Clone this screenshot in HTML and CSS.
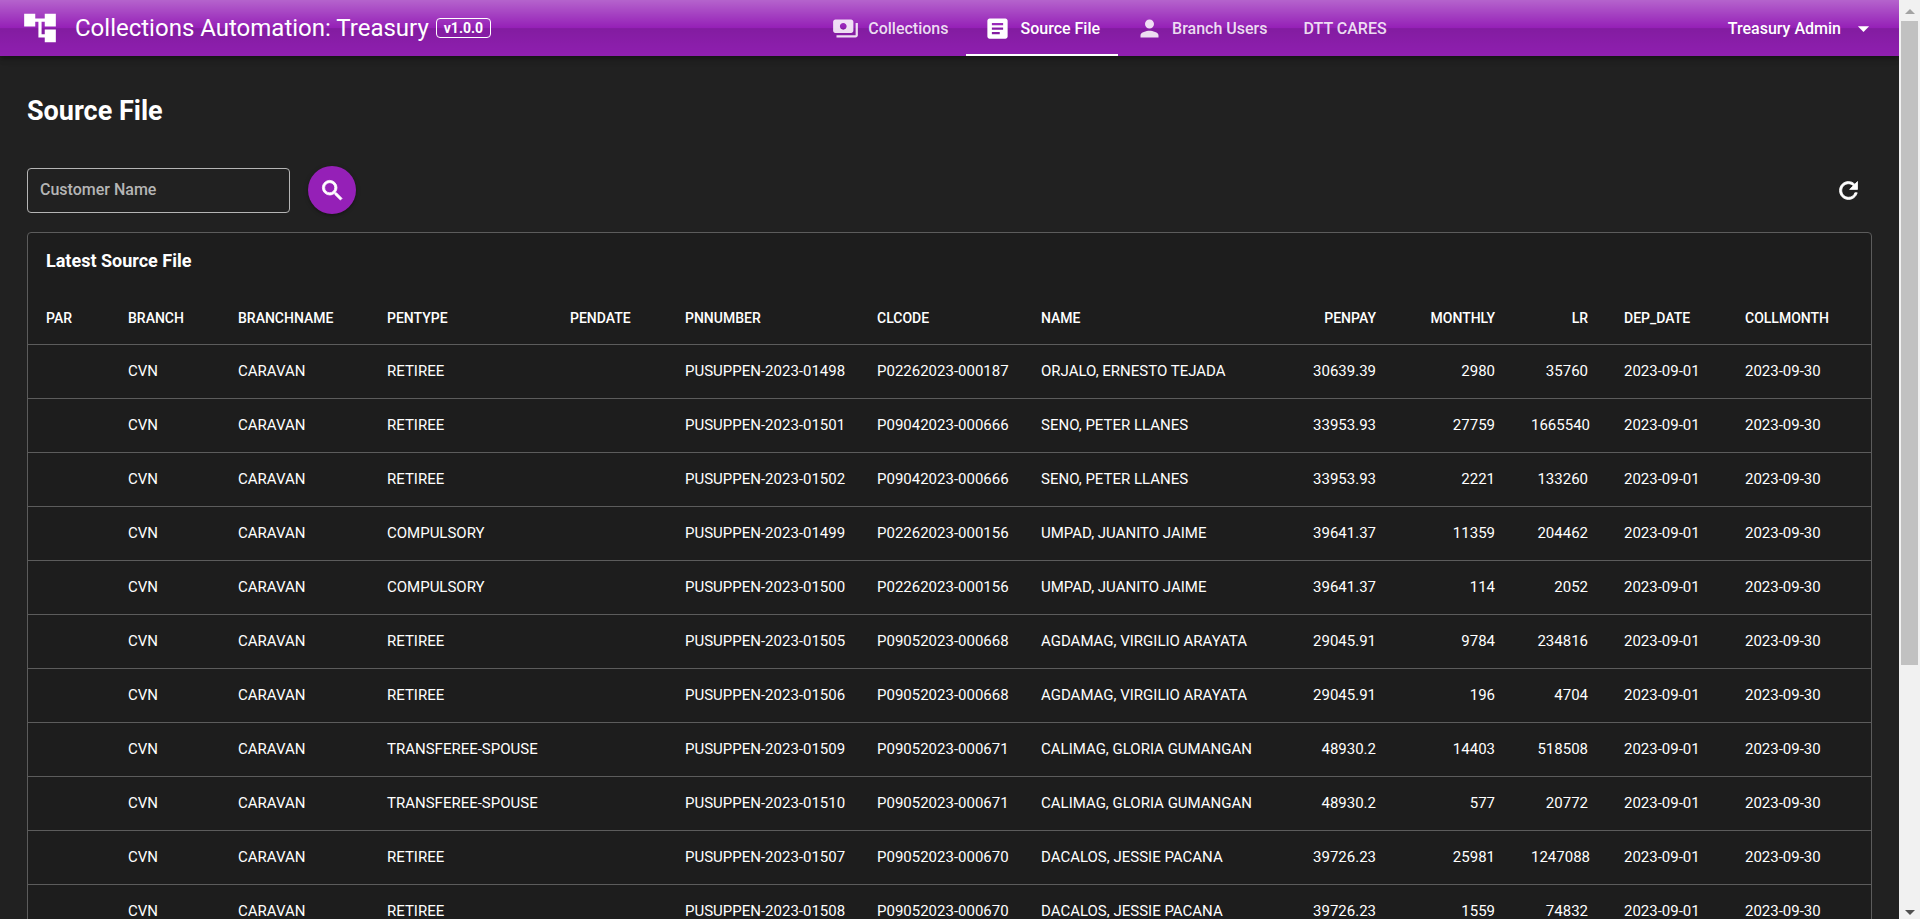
FILE: index.html
```html
<!DOCTYPE html>
<html lang="en">
<head>
<meta charset="utf-8">
<title>Collections Automation: Treasury</title>
<link rel="stylesheet" href="styles.css">
</head>
<body>
<div class="app">
  <div class="page">
    <header class="toolbar">
      <div class="brand">
        <svg class="brand-icon" viewBox="0 0 24 24" aria-hidden="true"><path d="M22 11V3h-7v3H9V3H2v8h7V8h2v10h4v3h7v-8h-7v3h-2V8h2v3z"/></svg>
        <span class="brand-name">Collections Automation: Treasury</span>
        <span class="version">v1.0.0</span>
      </div>
      <nav class="tabs">
        <a class="tab" href="#collections"><svg class="tab-icon" viewBox="0 0 24 24" aria-hidden="true"><path d="M19 14V6c0-1.100-.9-2-2-2H3c-1.100 0-2 .9-2 2v8c0 1.100.9 2 2 2h14c1.100 0 2-.9 2-2zm-9-1c-1.660 0-3-1.340-3-3s1.340-3 3-3 3 1.340 3 3-1.340 3-3 3zm13-6v11c0 1.100-.9 2-2 2H4v-2h17V7h2z"/></svg>Collections</a>
        <a class="tab tab-active" href="#source-file" aria-current="page"><svg class="tab-icon" viewBox="0 0 24 24" aria-hidden="true"><path d="M19 3H5c-1.100 0-2 .9-2 2v14c0 1.100.9 2 2 2h14c1.100 0 2-.9 2-2V5c0-1.100-.9-2-2-2zm-5 14H7v-2h7v2zm3-4H7v-2h10v2zm0-4H7V7h10v2z"/></svg>Source File</a>
        <a class="tab" href="#branch-users"><svg class="tab-icon" viewBox="0 0 24 24" aria-hidden="true"><path d="M12 12c2.210 0 4-1.790 4-4s-1.790-4-4-4-4 1.790-4 4 1.790 4 4 4zm0 2c-2.670 0-8 1.340-8 4v2h16v-2c0-2.660-5.330-4-8-4z"/></svg>Branch Users</a>
        <a class="tab" href="#dtt-cares">DTT CARES</a>
      </nav>
      <button class="account" type="button">Treasury Admin<svg class="caret" viewBox="0 0 24 24" aria-hidden="true"><path d="M7 10l5 5 5-5z"/></svg></button>
    </header>
    <main class="content">
      <h1 class="heading">Source File</h1>
      <form class="search">
        <input class="field" type="text" placeholder="Customer Name" aria-label="Customer Name">
        <button class="search-button" type="button" aria-label="Search"><svg class="icon" viewBox="0 0 24 24" aria-hidden="true"><path d="M15.500 14h-.79l-.28-.27A6.471 6.471 0 0 0 16 9.500 6.500 6.500 0 1 0 9.500 16c1.610 0 3.090-.59 4.230-1.570l.27.28v.79l5 4.990L20.490 19l-4.990-5zm-6 0C7.010 14 5 11.990 5 9.500S7.010 5 9.500 5 14 7.010 14 9.500 11.990 14 9.500 14z"/></svg></button>
        <button class="refresh" type="button" aria-label="Refresh"><svg class="icon" viewBox="0 0 24 24" aria-hidden="true"><path d="M17.650 6.350A7.958 7.958 0 0 0 12 4c-4.420 0-7.990 3.580-7.990 8s3.570 8 7.990 8c3.730 0 6.840-2.550 7.730-6h-2.080A5.990 5.990 0 0 1 12 18c-3.310 0-6-2.690-6-6s2.690-6 6-6c1.660 0 3.140.69 4.220 1.780L13 11h7V4l-2.350 2.350z"/></svg></button>
      </form>
      <section class="card">
        <h2 class="card-title">Latest Source File</h2>
        <table class="table">
          <colgroup><col class="c-par"><col class="c-branch"><col class="c-branchname"><col class="c-pentype"><col class="c-pendate"><col class="c-pnnumber"><col class="c-clcode"><col class="c-name"><col class="c-penpay"><col class="c-monthly"><col class="c-lr"><col class="c-depdate"><col class="c-collmonth"></colgroup>
          <thead>
            <tr><th>PAR</th><th>BRANCH</th><th>BRANCHNAME</th><th>PENTYPE</th><th>PENDATE</th><th>PNNUMBER</th><th>CLCODE</th><th>NAME</th><th class="num">PENPAY</th><th class="num">MONTHLY</th><th class="num">LR</th><th>DEP_DATE</th><th>COLLMONTH</th></tr>
          </thead>
          <tbody>
            <tr><td></td><td>CVN</td><td>CARAVAN</td><td>RETIREE</td><td></td><td>PUSUPPEN-2023-01498</td><td>P02262023-000187</td><td>ORJALO, ERNESTO TEJADA</td><td class="num">30639.39</td><td class="num">2980</td><td class="num">35760</td><td>2023-09-01</td><td>2023-09-30</td></tr>
            <tr><td></td><td>CVN</td><td>CARAVAN</td><td>RETIREE</td><td></td><td>PUSUPPEN-2023-01501</td><td>P09042023-000666</td><td>SENO, PETER LLANES</td><td class="num">33953.93</td><td class="num">27759</td><td class="num">1665540</td><td>2023-09-01</td><td>2023-09-30</td></tr>
            <tr><td></td><td>CVN</td><td>CARAVAN</td><td>RETIREE</td><td></td><td>PUSUPPEN-2023-01502</td><td>P09042023-000666</td><td>SENO, PETER LLANES</td><td class="num">33953.93</td><td class="num">2221</td><td class="num">133260</td><td>2023-09-01</td><td>2023-09-30</td></tr>
            <tr><td></td><td>CVN</td><td>CARAVAN</td><td>COMPULSORY</td><td></td><td>PUSUPPEN-2023-01499</td><td>P02262023-000156</td><td>UMPAD, JUANITO JAIME</td><td class="num">39641.37</td><td class="num">11359</td><td class="num">204462</td><td>2023-09-01</td><td>2023-09-30</td></tr>
            <tr><td></td><td>CVN</td><td>CARAVAN</td><td>COMPULSORY</td><td></td><td>PUSUPPEN-2023-01500</td><td>P02262023-000156</td><td>UMPAD, JUANITO JAIME</td><td class="num">39641.37</td><td class="num">114</td><td class="num">2052</td><td>2023-09-01</td><td>2023-09-30</td></tr>
            <tr><td></td><td>CVN</td><td>CARAVAN</td><td>RETIREE</td><td></td><td>PUSUPPEN-2023-01505</td><td>P09052023-000668</td><td>AGDAMAG, VIRGILIO ARAYATA</td><td class="num">29045.91</td><td class="num">9784</td><td class="num">234816</td><td>2023-09-01</td><td>2023-09-30</td></tr>
            <tr><td></td><td>CVN</td><td>CARAVAN</td><td>RETIREE</td><td></td><td>PUSUPPEN-2023-01506</td><td>P09052023-000668</td><td>AGDAMAG, VIRGILIO ARAYATA</td><td class="num">29045.91</td><td class="num">196</td><td class="num">4704</td><td>2023-09-01</td><td>2023-09-30</td></tr>
            <tr><td></td><td>CVN</td><td>CARAVAN</td><td>TRANSFEREE-SPOUSE</td><td></td><td>PUSUPPEN-2023-01509</td><td>P09052023-000671</td><td>CALIMAG, GLORIA GUMANGAN</td><td class="num">48930.2</td><td class="num">14403</td><td class="num">518508</td><td>2023-09-01</td><td>2023-09-30</td></tr>
            <tr><td></td><td>CVN</td><td>CARAVAN</td><td>TRANSFEREE-SPOUSE</td><td></td><td>PUSUPPEN-2023-01510</td><td>P09052023-000671</td><td>CALIMAG, GLORIA GUMANGAN</td><td class="num">48930.2</td><td class="num">577</td><td class="num">20772</td><td>2023-09-01</td><td>2023-09-30</td></tr>
            <tr><td></td><td>CVN</td><td>CARAVAN</td><td>RETIREE</td><td></td><td>PUSUPPEN-2023-01507</td><td>P09052023-000670</td><td>DACALOS, JESSIE PACANA</td><td class="num">39726.23</td><td class="num">25981</td><td class="num">1247088</td><td>2023-09-01</td><td>2023-09-30</td></tr>
            <tr><td></td><td>CVN</td><td>CARAVAN</td><td>RETIREE</td><td></td><td>PUSUPPEN-2023-01508</td><td>P09052023-000670</td><td>DACALOS, JESSIE PACANA</td><td class="num">39726.23</td><td class="num">1559</td><td class="num">74832</td><td>2023-09-01</td><td>2023-09-30</td></tr>
          </tbody>
        </table>
      </section>
    </main>
  </div>
  <div class="scrollbar" aria-hidden="true">
    <svg class="arrow arrow-up" viewBox="0 0 10 5"><path d="M0 5l5-5 5 5z"/></svg>
    <div class="track"><div class="thumb"></div></div>
    <svg class="arrow" viewBox="0 0 10 5"><path d="M0 0l5 5 5-5z"/></svg>
  </div>
</div>
</body>
</html>
```
FILE: styles.css
```css
:root {
  --primary: #9520b7;
  --line: #5c5c5c;
}

* {
  box-sizing: border-box;
}

body {
  margin: 0;
  background: #212121;
  color: #fff;
  font-family: Roboto, "Liberation Sans", sans-serif;
  font-size: 16px;
  font-weight: 500;
}

button,
input {
  font: inherit;
  color: inherit;
}

svg {
  display: block;
  flex: none;
  fill: currentColor;
}

.app {
  display: flex;
  height: 100vh;
  overflow: hidden;
}

.page {
  flex: 1;
  min-width: 0;
}

.toolbar {
  display: flex;
  align-items: center;
  justify-content: space-between;
  height: 56px;
  padding: 0 22px 0 21px;
  background: linear-gradient(to bottom, rgba(255, 255, 255, 0.3), rgba(255, 255, 255, 0) 50%, rgba(0, 0, 0, 0.12) 51%, rgba(0, 0, 0, 0.04)) var(--primary);
  box-shadow: 0 2px 4px -1px rgba(0, 0, 0, 0.2), 0 4px 5px rgba(0, 0, 0, 0.14), 0 1px 10px rgba(0, 0, 0, 0.12);
}

.brand {
  display: flex;
  align-items: center;
}

.brand-icon {
  width: 38px;
  height: 38px;
}

.brand-name {
  margin-left: 16px;
  font-size: 24px;
  font-weight: 400;
  line-height: 32px;
}

.version {
  margin-left: 7px;
  padding: 1px 7px;
  border: 1px solid #fff;
  border-radius: 4px;
  font-size: 14px;
  font-weight: 700;
  line-height: 16px;
}

.tabs {
  display: flex;
  align-self: stretch;
}

.tab {
  display: flex;
  align-items: center;
  gap: 9px;
  padding: 0 18px;
  border-top: 2px solid transparent;
  border-bottom: 2px solid transparent;
  color: rgba(255, 255, 255, 0.85);
  text-decoration: none;
}

.tab-active {
  border-bottom-color: #fff;
  color: #fff;
}

.tab-icon,
.caret {
  width: 27px;
  height: 27px;
}

.account {
  display: flex;
  align-items: center;
  gap: 9px;
  padding: 0;
  border: 0;
  background: none;
}

.content {
  padding: 37px 27px;
}

.heading {
  margin: 0;
  font-size: 27px;
  font-weight: 700;
  line-height: 36px;
}

.search {
  display: flex;
  align-items: center;
  margin: 37px 0 18px;
}

.field {
  width: 263px;
  height: 45px;
  padding: 0 12px 2px;
  border: 1px solid #b5b5b5;
  border-radius: 4px;
  background: none;
}

.field::placeholder {
  color: #b5b5b5;
  opacity: 1;
}

.search-button {
  display: grid;
  place-items: center;
  width: 48px;
  height: 48px;
  margin-left: 18px;
  padding: 0;
  border: 0;
  border-radius: 50%;
  background: var(--primary);
  box-shadow: 0 1px 5px rgba(0, 0, 0, 0.2), 0 2px 2px rgba(0, 0, 0, 0.14);
}

.refresh {
  margin-left: auto;
  padding: 0 10px;
  border: 0;
  background: none;
}

.icon {
  width: 27px;
  height: 27px;
  stroke: currentColor;
  stroke-width: 0.7;
}

.card {
  border: 1px solid var(--line);
  border-radius: 4px;
  background: #1d1d1d;
}

.card-title {
  margin: 0;
  padding: 14px 18px;
  font-size: 18px;
  font-weight: 700;
  line-height: 28px;
}

.table {
  width: 100%;
  table-layout: fixed;
  border-collapse: separate;
  border-spacing: 0;
  font-size: 15px;
  font-weight: 400;
  white-space: nowrap;
}

.table th,
.table td {
  height: 54px;
  padding: 0 18px 2px;
  border-bottom: 1px solid var(--line);
  text-align: left;
}

.table th {
  height: 56px;
  padding: 2px 18px 0;
  font-size: 14px;
  font-weight: 500;
}

.table .num {
  text-align: right;
}

.c-par { width: 82px; }
.c-branch { width: 110px; }
.c-branchname { width: 149px; }
.c-pentype { width: 183px; }
.c-pendate { width: 115px; }
.c-pnnumber { width: 192px; }
.c-clcode { width: 164px; }
.c-name { width: 242px; }
.c-penpay { width: 129px; }
.c-monthly { width: 119px; }
.c-lr { width: 93px; }
.c-depdate { width: 121px; }
.c-collmonth { width: 144px; }

.scrollbar {
  display: flex;
  flex-direction: column;
  align-items: center;
  width: 21px;
  padding: 9px 2px 4px;
  background: #f1f1f1;
  color: #505050;
}

.arrow {
  width: 10px;
  height: 5px;
}

.arrow-up {
  color: #a3a3a3;
}

.track {
  flex: 1;
  align-self: stretch;
  margin: 7px 0;
}

.thumb {
  height: 73%;
  background: #c1c1c1;
}
```
